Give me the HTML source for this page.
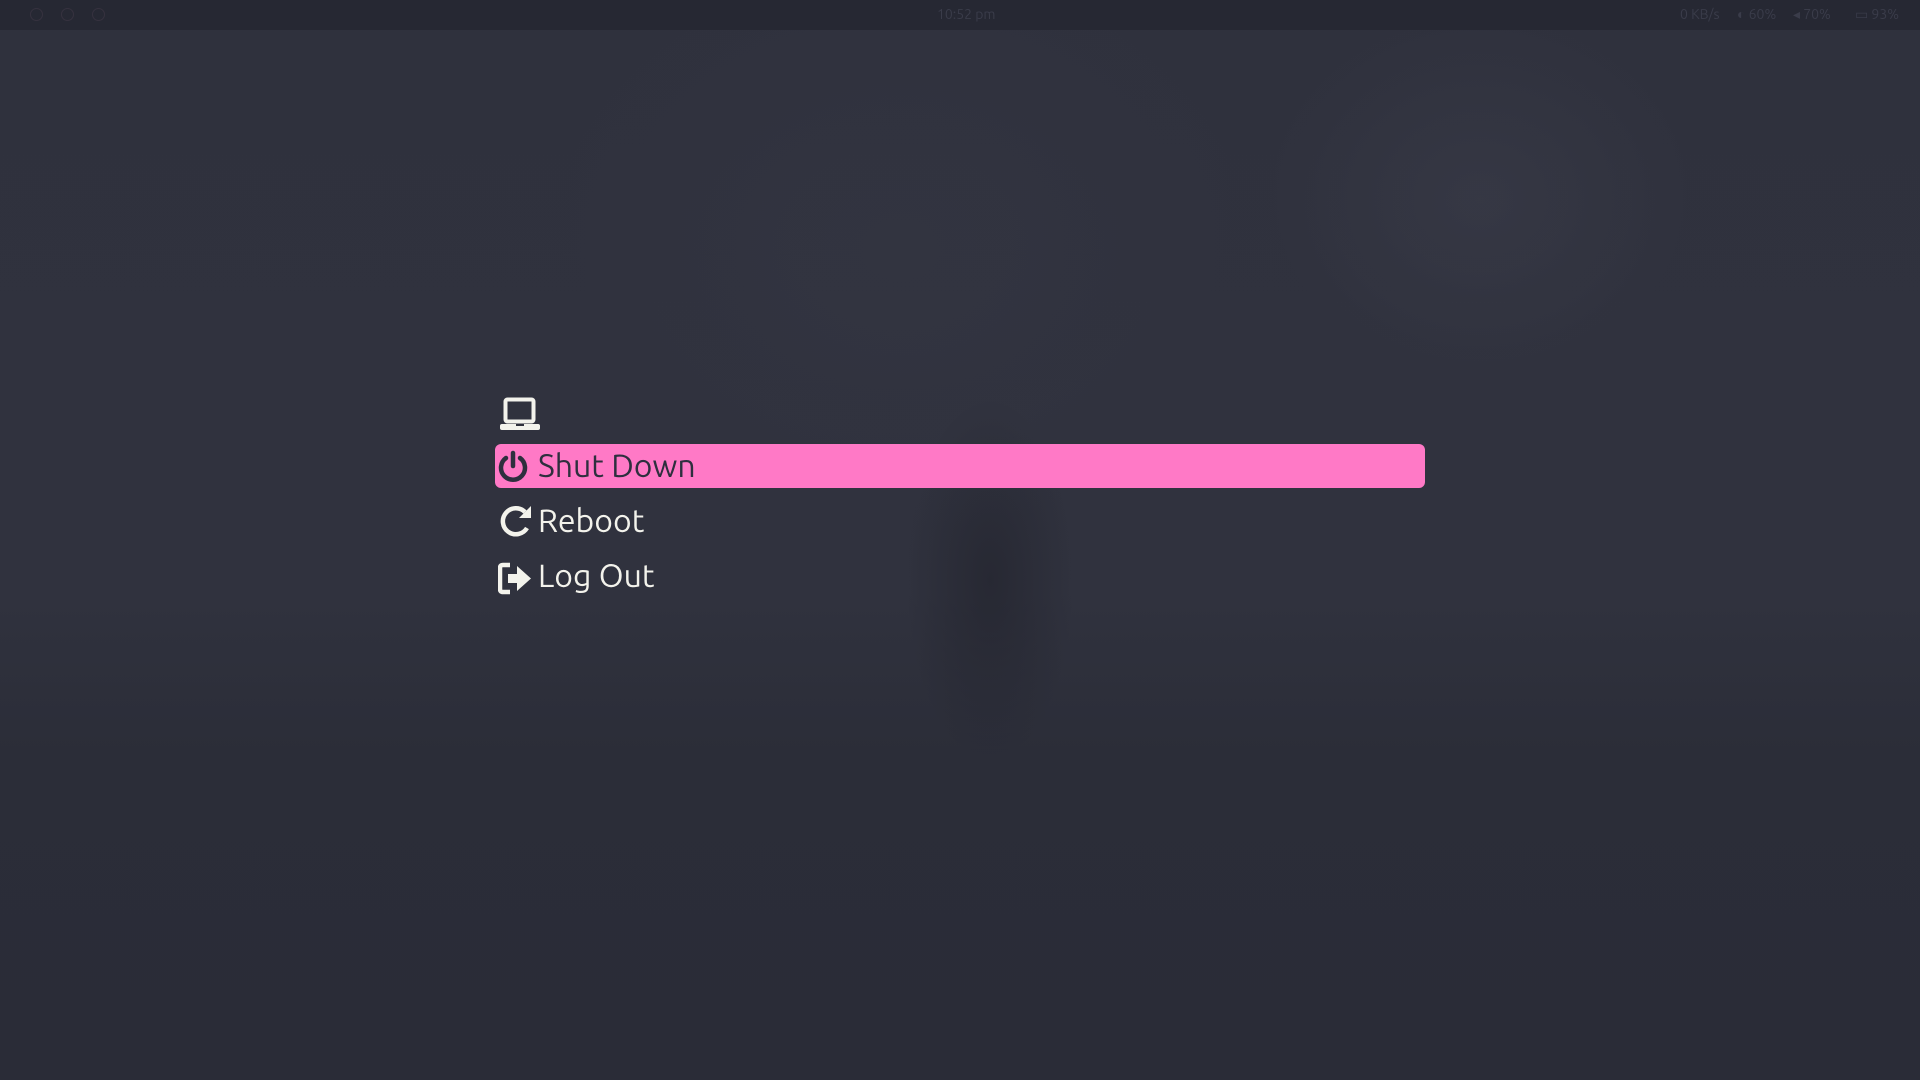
<!DOCTYPE html>
<html><head><meta charset="utf-8"><style>
html,body{margin:0;padding:0}
body{width:1920px;height:1080px;overflow:hidden;position:relative;font-family:"Ubuntu","Liberation Sans","DejaVu Sans",sans-serif;
background:
radial-gradient(ellipse 300px 260px at 1480px 200px, rgba(60,62,75,0.5), transparent 70%),
radial-gradient(ellipse 500px 400px at 900px 250px, rgba(55,57,70,0.35), transparent 70%),
radial-gradient(ellipse 120px 260px at 990px 580px, rgba(30,31,40,0.5), transparent 70%),
linear-gradient(to bottom,#2f313d 0%,#30323e 55%,#2b2d38 70%,#2a2c37 100%);}
.bar{position:absolute;left:0;top:0;width:1920px;height:30px;background:#262833;color:#3a3c4a;font-size:14px}
.item{position:absolute;left:499px;font-size:32px;color:#f3f3ec;height:45px;line-height:45px}
.hl{position:absolute;left:495px;top:444px;width:930px;height:44px;background:#ff79c6;border-radius:6px}
svg{position:absolute}
.c{position:absolute;top:8px;width:11px;height:11px;border:1px solid #36323f;border-radius:50%}
</style></head><body>
<div class="bar">
<div class="c" style="left:30px"></div>
<div class="c" style="left:61px"></div>
<div class="c" style="left:92px"></div>
<div style="position:absolute;left:937px;top:6px">10:52 pm</div>
<div style="position:absolute;left:1680px;top:6px">0 KB/s</div>
<div style="position:absolute;left:1737px;top:6px">◐ 60%</div>
<div style="position:absolute;left:1793px;top:6px">◂ 70%</div>
<div style="position:absolute;left:1855px;top:6px">▭ 93%</div>
</div>
<svg style="left:498px;top:396px" width="44" height="36" viewBox="0 0 44 36">
<rect x="7.5" y="3.5" width="28" height="22" rx="2" fill="none" stroke="#f3f3ec" stroke-width="4"/>
<rect x="2" y="28" width="40" height="6" rx="2" fill="#f3f3ec"/>
<rect x="18" y="28" width="8" height="2" fill="#2e303c"/>
</svg>
<div class="hl"></div>
<svg style="left:497px;top:450px" width="32" height="34" viewBox="0 0 32 34">
<path d="M9 8 A12 12 0 1 0 23 8" fill="none" stroke="#2e2f3e" stroke-width="4.5" stroke-linecap="round"/>
<line x1="16" y1="3" x2="16" y2="16" stroke="#2e2f3e" stroke-width="4.5" stroke-linecap="round"/>
</svg>
<div class="item" style="top:444px;left:538px;color:#2e2f3e">Shut Down</div>
<svg style="left:498px;top:503px" width="36" height="36" viewBox="0 0 36 36">
<path d="M27 9 A13 13 0 1 0 29 25" fill="none" stroke="#f3f3ec" stroke-width="4.5"/>
<path d="M33 3 L33 15 L21 15 Z" fill="#f3f3ec"/>
</svg>
<div class="item" style="top:499px;left:538px">Reboot</div>
<svg style="left:498px;top:562px" width="36" height="34" viewBox="0 0 36 34">
<path d="M12 3 L5 3 Q2 3 2 6 L2 27 Q2 30 5 30 L12 30" fill="none" stroke="#f3f3ec" stroke-width="4.5"/>
<path d="M10 12 L19 12 L19 4 L33 16.5 L19 29 L19 21 L10 21 Z" fill="#f3f3ec"/>
</svg>
<div class="item" style="top:554px;left:538px">Log Out</div>
</body></html>
